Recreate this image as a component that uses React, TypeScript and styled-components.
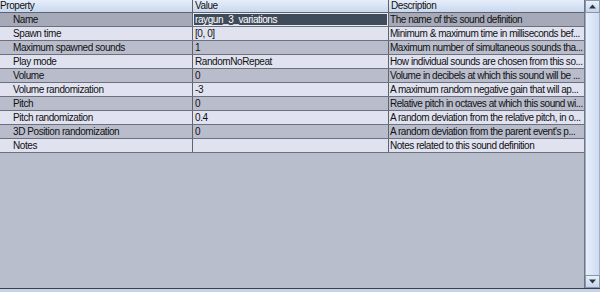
import React from "react";
import styled, { createGlobalStyle } from "styled-components";

const Global = createGlobalStyle`
  html, body { margin: 0; padding: 0; background: #b9becc; }
  body { width: 600px; height: 292px; overflow: hidden; }
`;

const Frame = styled.div`
  width: 600px;
  height: 292px;
  display: flex;
  flex-direction: column;
  background: #b9becc;
  font-family: "Liberation Sans", Arial, sans-serif;
  font-size: 10px;
  letter-spacing: -0.42px;
  color: #111;
`;

const Main = styled.div`
  flex: 1;
  display: flex;
  min-height: 0;
`;

const Table = styled.div`
  flex: 1;
  display: flex;
  flex-direction: column;
`;

const cols = "192px 196px 196px";

const HeaderRow = styled.div`
  display: grid;
  grid-template-columns: ${cols};
  height: 13px;
  background: linear-gradient(#e6eefa, #c9d8ee);
  border-bottom: 1px solid #5d6470;
  box-sizing: border-box;
`;

const HeaderCell = styled.div<{ $first?: boolean }>`
  padding-left: ${(p) => (p.$first ? "0" : "2px")};
  line-height: 12px;
  border-left: ${(p) => (p.$first ? "none" : "1px solid #5d6470")};
  white-space: nowrap;
  overflow: hidden;
`;

const Row = styled.div<{ $dark: boolean }>`
  display: grid;
  grid-template-columns: ${cols};
  height: 14px;
  box-sizing: border-box;
  border-bottom: 1px solid #6b707c;
  background: ${(p) => (p.$dark ? "#b8bccb" : "#e0e2f0")};
`;

const Cell = styled.div<{ $indent?: boolean; $first?: boolean; $selected?: boolean; $sel?: boolean; $desc?: boolean }>`
  padding-left: ${(p) => (p.$indent ? "13px" : p.$desc ? "1px" : "2px")};
  letter-spacing: ${(p) => (p.$desc ? "-0.46px" : "-0.42px")};
  line-height: 13px;
  border-left: ${(p) => (p.$first ? "none" : "1px solid #5d6470")};
  white-space: nowrap;
  overflow: hidden;
  background: ${(p) => (p.$selected ? "#3f4b5b" : p.$sel ? "#a6aab8" : "transparent")};
  color: ${(p) => (p.$selected ? "#ffffff" : "#111")};
  box-shadow: ${(p) => (p.$selected ? "inset 0 0 0 1px #e8ecf2" : "none")};
`;

const Scrollbar = styled.div`
  width: 16px;
  display: flex;
  flex-direction: column;
  background: #d7e4f6;
  border-left: 1px solid #6b7686;
  box-sizing: border-box;
`;

const ScrollTrack = styled.div`
  flex: 1;
  background: linear-gradient(90deg, #e6eefb, #cfdcf0);
  border-left: 1px solid #9fb0c8;
  border-right: 1px solid #9fb0c8;
`;

const Arrow = styled.div`
  height: 13px;
  display: flex;
  align-items: center;
  justify-content: center;
  background: linear-gradient(#e8f0fb, #c6d5eb);
  border: 1px solid #8796ad;
  box-sizing: border-box;
`;

const Bottom = styled.div`
  height: 4px;
  border-top: 1px solid #3b414c;
  background: #c4d3ea;
  box-sizing: border-box;
`;

const rows: [string, string, string][] = [
  ["Name", "raygun_3_variations", "The name of this sound definition"],
  ["Spawn time", "[0, 0]", "Minimum & maximum time in milliseconds bef..."],
  ["Maximum spawned sounds", "1", "Maximum number of simultaneous sounds tha..."],
  ["Play mode", "RandomNoRepeat", "How individual sounds are chosen from this so..."],
  ["Volume", "0", "Volume in decibels at which this sound will be ..."],
  ["Volume randomization", "-3", "A maximum random negative gain that will ap..."],
  ["Pitch", "0", "Relative pitch in octaves at which this sound wi..."],
  ["Pitch randomization", "0.4", "A random deviation from the relative pitch, in o..."],
  ["3D Position randomization", "0", "A random deviation from the parent event's p..."],
  ["Notes", "", "Notes related to this sound definition"],
];

const Tri = ({ up }: { up: boolean }) => (
  <svg width="7" height="5" viewBox="0 0 7 5">
    <polygon points={up ? "3.5,0.5 7,4.5 0,4.5" : "0,0.5 7,0.5 3.5,4.5"} fill="#2e3540" />
  </svg>
);

export default function App() {
  return (
    <>
      <Global />
      <Frame>
        <Main>
          <Table>
            <HeaderRow>
              <HeaderCell $first>Property</HeaderCell>
              <HeaderCell>Value</HeaderCell>
              <HeaderCell>Description</HeaderCell>
            </HeaderRow>
            {rows.map(([p, v, d], i) => (
              <Row key={p} $dark={i % 2 === 0}>
                <Cell $first $indent $sel={i === 0}>{p}</Cell>
                <Cell $selected={i === 0}>{v}</Cell>
                <Cell $desc $sel={i === 0}>{d}</Cell>
              </Row>
            ))}
          </Table>
          <Scrollbar>
            <Arrow><Tri up /></Arrow>
            <ScrollTrack />
            <Arrow><Tri up={false} /></Arrow>
          </Scrollbar>
        </Main>
        <Bottom />
      </Frame>
    </>
  );
}
